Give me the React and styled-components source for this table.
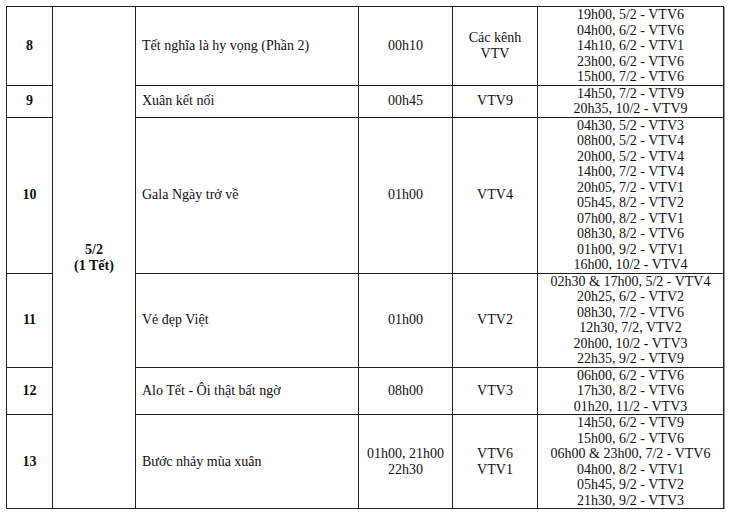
import React from "react";
import styled, { createGlobalStyle } from "styled-components";

const GlobalStyle = createGlobalStyle`
    body {
        margin: 0;
        background: #ffffff;
        font-family: "Liberation Serif", "Times New Roman", serif;
        color: #111;
    }
`;

const Page = styled.div`
    padding: 6px 0 0 6px;
`;

const Table = styled.table`
    border-collapse: collapse;
    table-layout: fixed;
    width: 717px;
    font-size: 14px;
    line-height: 15.5px;
    border: 1px solid #222;
    box-shadow: 1px 1px 0 #9a9a9a;
`;

const Col = styled.col`
    width: ${(p) => p.$w}px;
`;

const Cell = styled.td`
    border: 1px solid #222;
    padding: 0 ${(p) => (p.$left ? "6px" : "2px")};
    text-align: ${(p) => (p.$left ? "left" : "center")};
    vertical-align: middle;
    font-weight: ${(p) => (p.$bold ? "bold" : "normal")};
    white-space: nowrap;
`;

const Line = styled.div`
    height: 15.5px;
`;

const columns = [46, 83, 223, 94, 85, 186];

const rows = [
    {
        no: "8",
        title: "Tết nghĩa là hy vọng (Phần 2)",
        time: ["00h10"],
        channel: ["Các kênh", "VTV"],
        reruns: [
            "19h00, 5/2 - VTV6",
            "04h00, 6/2 - VTV6",
            "14h10, 6/2 - VTV1",
            "23h00, 6/2 - VTV6",
            "15h00, 7/2 - VTV6",
        ],
    },
    {
        no: "9",
        title: "Xuân kết nối",
        time: ["00h45"],
        channel: ["VTV9"],
        reruns: ["14h50, 7/2 - VTV9", "20h35, 10/2 - VTV9"],
    },
    {
        no: "10",
        title: "Gala Ngày trở về",
        time: ["01h00"],
        channel: ["VTV4"],
        reruns: [
            "04h30, 5/2 - VTV3",
            "08h00, 5/2 - VTV4",
            "20h00, 5/2 - VTV4",
            "14h00, 7/2 - VTV4",
            "20h05, 7/2 - VTV1",
            "05h45, 8/2 - VTV2",
            "07h00, 8/2 - VTV1",
            "08h30, 8/2 - VTV6",
            "01h00, 9/2 - VTV1",
            "16h00, 10/2 - VTV4",
        ],
    },
    {
        no: "11",
        title: "Vẻ đẹp Việt",
        time: ["01h00"],
        channel: ["VTV2"],
        reruns: [
            "02h30 & 17h00, 5/2 - VTV4",
            "20h25, 6/2 - VTV2",
            "08h30, 7/2 - VTV6",
            "12h30, 7/2, VTV2",
            "20h00, 10/2 - VTV3",
            "22h35, 9/2 - VTV9",
        ],
    },
    {
        no: "12",
        title: "Alo Tết - Ôi thật bất ngờ",
        time: ["08h00"],
        channel: ["VTV3"],
        reruns: [
            "06h00, 6/2 - VTV6",
            "17h30, 8/2 - VTV6",
            "01h20, 11/2 - VTV3",
        ],
    },
    {
        no: "13",
        title: "Bước nhảy mùa xuân",
        time: ["01h00, 21h00", "22h30"],
        channel: ["VTV6", "VTV1"],
        reruns: [
            "14h50, 6/2 - VTV9",
            "15h00, 6/2 - VTV6",
            "06h00 & 23h00, 7/2 - VTV6",
            "04h00, 8/2 - VTV1",
            "05h45, 9/2 - VTV2",
            "21h30, 9/2 - VTV3",
        ],
    },
];

const Lines = ({ items }) =>
    items.map((item, index) => <Line key={index}>{item}</Line>);

const App = () => {
    return (
        <Page>
            <GlobalStyle />
            <Table>
                <colgroup>
                    {columns.map((w, index) => (
                        <Col key={index} $w={w} />
                    ))}
                </colgroup>
                <tbody>
                    {rows.map((row, index) => (
                        <tr key={row.no}>
                            <Cell $bold>{row.no}</Cell>
                            {index === 0 ? (
                                <Cell $bold rowSpan={rows.length}>
                                    <Line>5/2</Line>
                                    <Line>(1 Tết)</Line>
                                </Cell>
                            ) : null}
                            <Cell $left>{row.title}</Cell>
                            <Cell>
                                <Lines items={row.time} />
                            </Cell>
                            <Cell>
                                <Lines items={row.channel} />
                            </Cell>
                            <Cell>
                                <Lines items={row.reruns} />
                            </Cell>
                        </tr>
                    ))}
                </tbody>
            </Table>
        </Page>
    );
};

export default App;
